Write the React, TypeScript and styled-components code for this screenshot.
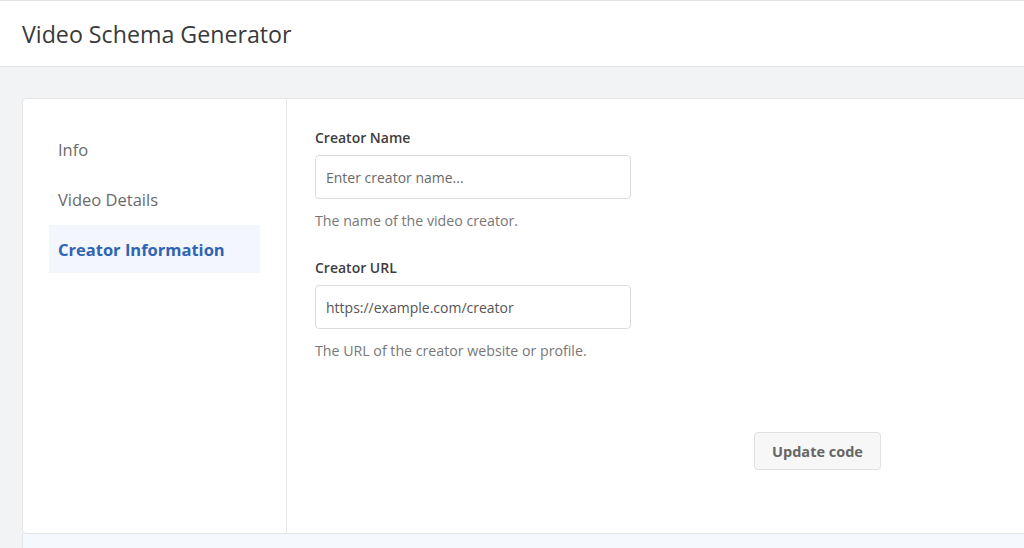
import styled, { createGlobalStyle } from "styled-components";

const Global = createGlobalStyle`
  html, body { margin: 0; padding: 0; }
  body {
    font-family: "Open Sans", "Noto Sans", sans-serif;
    background: #f2f3f5;
    overflow: hidden;
  }
`;

const Page = styled.div`
  width: 1024px;
  height: 548px;
  overflow: hidden;
  border-top: 1px solid #e4e4e4;
  box-sizing: border-box;
`;

const Header = styled.header`
  height: 66px;
  background: #fff;
  border-top: 1px solid #fff;
  border-bottom: 1px solid #e2e2e2;
  display: flex;
  align-items: center;
  padding-left: 22px;
  box-sizing: border-box;
`;

const Title = styled.h1`
  margin: 0;
  font-size: 23.2px;
  font-weight: 400;
  color: #3a3a3a;
`;

const Body = styled.main`
  padding: 31px 0 0 22px;
`;

const Card = styled.section`
  display: flex;
  width: 1040px;
  height: 436px;
  background: #fff;
  border: 1px solid #e4e4e4;
  border-radius: 4px;
  box-sizing: border-box;
`;

const Footer = styled.div`
  width: 1040px;
  height: 20px;
  background: #f5f8fc;
  border-left: 1px solid #e4e4e4;
`;

const Sidebar = styled.nav`
  width: 264px;
  border-right: 1px solid #e6e6e6;
  padding: 26px 26px 0 26px;
  box-sizing: border-box;
  display: flex;
  flex-direction: column;
  gap: 2px;
`;

const NavItem = styled.div<{ $active?: boolean }>`
  height: 48px;
  display: flex;
  align-items: center;
  padding-left: 9px;
  font-size: 16.5px;
  font-weight: ${(p) => (p.$active ? 700 : 400)};
  color: ${(p) => (p.$active ? "#2f63b3" : "#6b6b6b")};
  background: ${(p) => (p.$active ? "#f3f7fd" : "transparent")};
`;

const Content = styled.div`
  flex: 1;
  padding: 29px 0 0 28px;
  display: flex;
  flex-direction: column;
`;

const Field = styled.div`
  display: flex;
  flex-direction: column;
  margin-bottom: 28px;
`;

const Label = styled.label`
  font-size: 14px;
  font-weight: 600;
  color: #3d3d3d;
  margin-bottom: 8px;
`;

const Input = styled.input`
  width: 316px;
  height: 44px;
  box-sizing: border-box;
  border: 1px solid #dcdcdc;
  border-radius: 4px;
  padding: 0 10px;
  font-family: inherit;
  font-size: 14px;
  color: #555;
  outline: none;
  &::placeholder { color: #6a6a6a; }
`;

const Help = styled.p`
  margin: 12px 0 0;
  font-size: 14.2px;
  color: #777;
`;

const Actions = styled.div`
  display: flex;
  padding-left: 439px;
  margin-top: 44px;
`;

const Button = styled.button`
  width: 127px;
  height: 38px;
  background: #f7f7f7;
  border: 1px solid #e0e0e0;
  border-radius: 4px;
  font-family: inherit;
  font-size: 14.5px;
  font-weight: 700;
  color: #666;
`;

export default function App() {
  return (
    <Page>
      <Global />
      <Header>
        <Title>Video Schema Generator</Title>
      </Header>
      <Body>
        <Card>
          <Sidebar>
            <NavItem>Info</NavItem>
            <NavItem>Video Details</NavItem>
            <NavItem $active>Creator Information</NavItem>
          </Sidebar>
          <Content>
            <Field>
              <Label>Creator Name</Label>
              <Input placeholder="Enter creator name..." />
              <Help>The name of the video creator.</Help>
            </Field>
            <Field>
              <Label>Creator URL</Label>
              <Input defaultValue="https://example.com/creator" />
              <Help>The URL of the creator website or profile.</Help>
            </Field>
            <Actions>
              <Button>Update code</Button>
            </Actions>
          </Content>
        </Card>
        <Footer />
      </Body>
    </Page>
  );
}
